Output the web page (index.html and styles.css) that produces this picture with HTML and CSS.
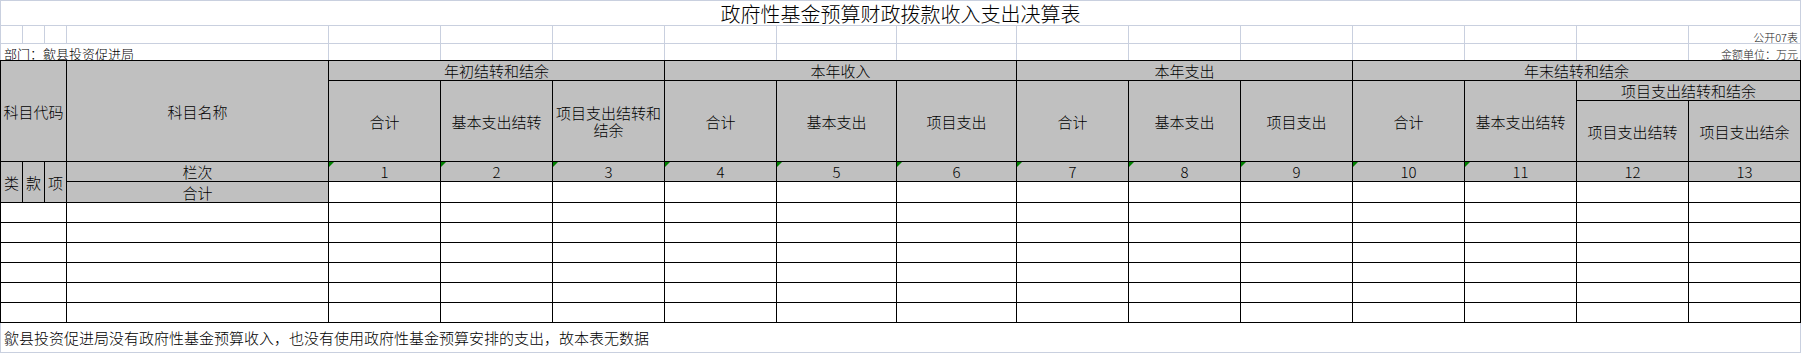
FILE: index.html
```html
<!DOCTYPE html>
<html lang="zh-CN">
<head>
<meta charset="utf-8">
<title>政府性基金预算财政拨款收入支出决算表</title>
<link rel="stylesheet" href="styles.css">
</head>
<body>
<div class="sheet">
  <div class="top">
    <div class="title">政府性基金预算财政拨款收入支出决算表</div>
    <div></div><div></div><div></div><div></div><div></div><div></div><div></div><div></div><div></div><div></div><div></div><div></div><div></div><div></div><div></div><div></div>
    <div class="unit">公开07表</div>
    <div class="dept">部门：歙县投资促进局</div>
    <div></div><div></div><div></div><div></div><div></div><div></div><div></div><div></div><div></div><div></div><div></div><div></div>
    <div class="unit">金额单位：万元</div>
  </div>

  <div class="grid">
    <div class="h c3 r3">科目代码</div>
    <div class="h r3">科目名称</div>
    <div class="h c3">年初结转和结余</div>
    <div class="h c3">本年收入</div>
    <div class="h c3">本年支出</div>
    <div class="h c4">年末结转和结余</div>

    <div class="h r2">合计</div>
    <div class="h r2">基本支出结转</div>
    <div class="h r2">项目支出结转和结余</div>
    <div class="h r2">合计</div>
    <div class="h r2">基本支出</div>
    <div class="h r2">项目支出</div>
    <div class="h r2">合计</div>
    <div class="h r2">基本支出</div>
    <div class="h r2">项目支出</div>
    <div class="h r2">合计</div>
    <div class="h r2">基本支出结转</div>
    <div class="h c2">项目支出结转和结余</div>
    <div class="h">项目支出结转</div>
    <div class="h">项目支出结余</div>

    <div class="h r2">类</div>
    <div class="h r2">款</div>
    <div class="h r2">项</div>
    <div class="h">栏次</div>
    <div class="h n">1</div>
    <div class="h n">2</div>
    <div class="h n">3</div>
    <div class="h n">4</div>
    <div class="h n">5</div>
    <div class="h n">6</div>
    <div class="h n">7</div>
    <div class="h n">8</div>
    <div class="h n">9</div>
    <div class="h n">10</div>
    <div class="h n">11</div>
    <div class="h">12</div>
    <div class="h">13</div>

    <div class="h">合计</div>
    <div></div><div></div><div></div><div></div><div></div><div></div><div></div><div></div><div></div><div></div><div></div><div></div><div></div>

    <div class="c3"></div><div></div><div></div><div></div><div></div><div></div><div></div><div></div><div></div><div></div><div></div><div></div><div></div><div></div><div></div>
    <div class="c3"></div><div></div><div></div><div></div><div></div><div></div><div></div><div></div><div></div><div></div><div></div><div></div><div></div><div></div><div></div>
    <div class="c3"></div><div></div><div></div><div></div><div></div><div></div><div></div><div></div><div></div><div></div><div></div><div></div><div></div><div></div><div></div>
    <div class="c3"></div><div></div><div></div><div></div><div></div><div></div><div></div><div></div><div></div><div></div><div></div><div></div><div></div><div></div><div></div>
    <div class="c3"></div><div></div><div></div><div></div><div></div><div></div><div></div><div></div><div></div><div></div><div></div><div></div><div></div><div></div><div></div>
    <div class="c3"></div><div></div><div></div><div></div><div></div><div></div><div></div><div></div><div></div><div></div><div></div><div></div><div></div><div></div><div></div>
  </div>

  <div class="note">歙县投资促进局没有政府性基金预算收入，也没有使用政府性基金预算安排的支出，故本表无数据</div>
</div>
</body>
</html>
```
FILE: styles.css
```css
html, body {
  margin: 0;
  padding: 0;
  background: #ffffff;
}

body {
  font-family: "Noto Sans CJK SC", "Noto Sans", sans-serif;
  font-weight: 300;
  color: #000000;
}

.sheet {
  width: 1801px;
}

/* sheet rows above the table: light grid lines */
.top {
  display: grid;
  grid-template-columns: 21px 21px 21px 261px repeat(4, 111px) 119px 119px repeat(7, 111px);
  grid-template-rows: 24px 17px 16px;
  gap: 1px;
  padding: 1px 1px 0 1px;
  background: #c9d0df;
}

.top > div {
  background: #ffffff;
  min-width: 0;
}

.title {
  grid-column: 1 / -1;
  display: flex;
  justify-content: center;
  align-items: flex-end;
  font-size: 20px;
  line-height: 20px;
  padding-bottom: 1px;
}

.unit {
  display: flex;
  justify-content: flex-end;
  align-items: flex-end;
  font-size: 11px;
  line-height: 11px;
  color: #222222;
  padding-right: 2px;
  white-space: nowrap;
}

.dept {
  grid-column: span 4;
  display: flex;
  align-items: flex-end;
  font-size: 13px;
  line-height: 13px;
  padding-left: 3px;
  white-space: nowrap;
}

/* the bordered table */
.grid {
  display: grid;
  grid-template-columns: 21px 21px 21px 261px repeat(4, 111px) 119px 119px repeat(7, 111px);
  grid-template-rows: 19px 19px 60px 19px 20px repeat(6, 19px);
  gap: 1px;
  padding: 1px;
  background: #000000;
}

.grid > div {
  background: #ffffff;
  display: flex;
  align-items: center;
  justify-content: center;
  text-align: center;
  font-size: 15px;
  line-height: 17px;
  min-width: 0;
}

.grid > .h {
  background: #c0c0c0;
}

.c2 { grid-column: span 2; }
.c3 { grid-column: span 3; }
.c4 { grid-column: span 4; }
.r2 { grid-row: span 2; }
.r3 { grid-row: span 3; }

.n {
  position: relative;
}

.n::before {
  content: "";
  position: absolute;
  left: 0;
  top: 0;
  width: 0;
  height: 0;
  border-top: 5px solid #008000;
  border-right: 5px solid transparent;
}

.note {
  box-sizing: border-box;
  width: 1801px;
  height: 30px;
  border: 1px solid #c9d0df;
  border-top: 0;
  display: flex;
  align-items: center;
  padding-left: 3px;
  font-size: 15px;
  line-height: 17px;
  white-space: nowrap;
}
```
